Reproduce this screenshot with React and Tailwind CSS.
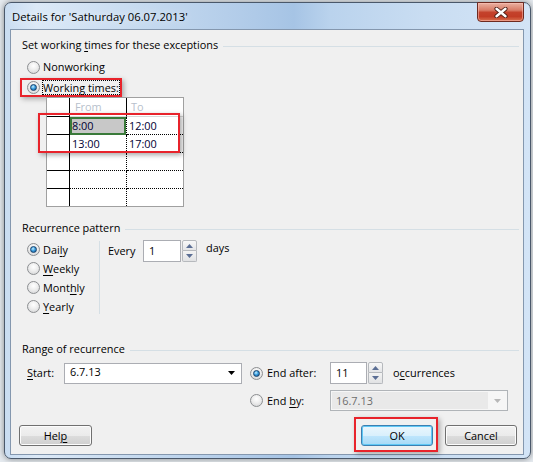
import React from "react";

const RED = "border-[#e8232b]";

function Radio({ checked }) {
  return (
    <span className="flex h-[13px] w-[13px] shrink-0 items-center justify-center rounded-full border border-[#8c8e91] bg-[radial-gradient(circle_at_50%_35%,#ffffff_0%,#eeeeee_45%,#cfd0d2_100%)]">
      {checked && (
        <span className="h-[7px] w-[7px] rounded-full border border-[#16406b] bg-[radial-gradient(circle_at_40%_35%,#c8f0ff_0%,#3a9ee0_45%,#0f4f8a_100%)]" />
      )}
    </span>
  );
}

function Header({ children }) {
  return (
    <div className="ml-[11px] mr-[4px] flex h-4 items-center">
      <span className="whitespace-nowrap">{children}</span>
      <div className="ml-[5px] mt-[2px] h-px flex-1 bg-[#d5dfe5]" />
    </div>
  );
}

function U({ children }) {
  return <span className="underline decoration-1 underline-offset-[2px]">{children}</span>;
}

function Spinner() {
  return (
    <div className="ml-px flex h-[22px] w-[15px] flex-col">
      <div className="flex h-[11px] items-center justify-center rounded-t-[2px] border border-[#b6b9bd] bg-[linear-gradient(#f8f8f8,#e4e5e7)]">
        <svg width="7" height="4" viewBox="0 0 7 4">
          <path d="M0 4 L3.5 0 L7 4Z" fill="#5b6e94" />
        </svg>
      </div>
      <div className="flex h-[11px] items-center justify-center rounded-b-[2px] border border-t-0 border-[#b6b9bd] bg-[linear-gradient(#f3f3f3,#e1e2e4)]">
        <svg width="7" height="4" viewBox="0 0 7 4">
          <path d="M0 0 L3.5 4 L7 0Z" fill="#5b6e94" />
        </svg>
      </div>
    </div>
  );
}

function Button({ children, primary, className = "" }) {
  const look = primary
    ? "border-[#3c7fb1] bg-[linear-gradient(#eaf6fd_0%,#d9f0fc_50%,#bee6fd_51%,#a7d9f5_100%)] shadow-[inset_0_0_0_1px_#5fc8f5]"
    : "border-[#707070] bg-[linear-gradient(#f2f2f2_0%,#ebebeb_50%,#dddddd_51%,#cfcfcf_100%)] shadow-[inset_0_0_0_1px_#fcfcfc]";
  return (
    <div className={`flex h-[21px] items-center justify-center rounded-[3px] border ${look} ${className}`}>
      {children}
    </div>
  );
}

const rows = [
  ["8:00", "12:00"],
  ["13:00", "17:00"],
  ["", ""],
  ["", ""],
  ["", ""],
];

function TimesTable() {
  return (
    <div className="relative ml-[35px] w-[138px]">
      <div className="grid grid-cols-[23px_57px_56px] border border-[#a0a0a0] bg-white leading-4 text-[#000033]">
        <div className="h-[19px] border-b border-r border-black" />
        <div className="h-[19px] border-b border-r border-b-[#d8d8d8] border-r-black pl-[5px] pt-px text-[#b7bfcc]">From</div>
        <div className="h-[19px] border-b border-[#d8d8d8] pl-[4px] pt-px text-[#b7bfcc]">To</div>
        {rows.map((r, i) => {
          const last = i === rows.length - 1;
          const h = last ? "h-[17px]" : "h-[18px] border-b";
          return (
            <React.Fragment key={i}>
              <div className={`${h} border-r border-black`} />
              {i === 0 ? (
                <div className={`${h} border-r border-dotted border-black`}>
                  <div className="h-[18px] border-2 border-[#3a7a3a] bg-[#c8c8c8] leading-[14px]">{r[0]}</div>
                </div>
              ) : (
                <div className={`${h} border-r border-dotted border-black pl-[2px] leading-[17px]`}>{r[0]}</div>
              )}
              <div className={`${h} border-dotted border-black pl-[2px] leading-[17px]`}>{r[1]}</div>
            </React.Fragment>
          );
        })}
      </div>
      <div className={`pointer-events-none absolute left-[-8px] top-[16px] h-[40px] w-[142px] border-2 ${RED} shadow-[2px_2px_5px_rgba(0,0,0,0.35)]`} />
    </div>
  );
}

function Combo({ text, disabled }) {
  if (disabled) {
    return (
      <div className="flex h-[21px] w-[178px] items-center border border-[#b0b4b8] bg-[#f6f6f6] p-px">
        <div className="flex h-full flex-1 items-center bg-[#e9e9e9] pl-[4px] text-[#6d6d6d]">{text}</div>
        <div className="flex h-full w-[18px] items-center justify-center">
          <svg width="7" height="4" viewBox="0 0 7 4">
            <path d="M0 0 L3.5 4 L7 0Z" fill="#b8b8b8" />
          </svg>
        </div>
      </div>
    );
  }
  return (
    <div className="flex h-[21px] w-[178px] items-center border border-[#abadb3] bg-white">
      <div className="flex-1 pb-[2px] pl-[5px]">{text}</div>
      <div className="flex w-[18px] items-center justify-center pr-[2px]">
        <svg width="7" height="4" viewBox="0 0 7 4">
          <path d="M0 0 L3.5 4 L7 0Z" fill="#000000" />
        </svg>
      </div>
    </div>
  );
}

export default function App() {
  return (
    <div className="h-[462px] w-[533px] overflow-hidden bg-[#e6ebf0] pl-[4px] pt-[2px] font-['Open_Sans','Liberation_Sans',sans-serif] text-[10.9px] leading-4 text-black">
      <div className="flex h-[457px] w-[527px] flex-col rounded-[7px] border border-[#4a586a] bg-[linear-gradient(90deg,#c8dcf1_0%,#dce9f7_6%,#c7dbf0_25%,#b2cce9_45%,#a6c4e5_55%,#bad3ed_62%,#c9ddf2_80%,#d3e4f6_100%)] shadow-[0_0_6px_rgba(0,0,0,0.45)]">
        {/* title bar */}
        <div className="flex h-[26px] items-start">
          <span className="ml-[7px] mt-[6px] flex-1 whitespace-nowrap text-[11.25px] [text-shadow:0_0_8px_rgba(255,255,255,0.95)]">
            Details for 'Sathurday 06.07.2013'
          </span>
          <div className="-mt-px mr-[6px] flex h-[20px] w-[47px] items-center justify-center rounded-b-[4px] border border-[#6e2a20] bg-[linear-gradient(#eab1a2_0%,#d87b66_40%,#c4422c_52%,#c23c25_75%,#d9704f_100%)] shadow-[inset_0_0_0_1px_rgba(255,200,190,0.5)]">
            <svg width="14" height="11" viewBox="0 0 14 11">
              <path d="M2.5 1.8 L11.5 9.2 M11.5 1.8 L2.5 9.2" stroke="#4a1d14" strokeWidth="4.2" strokeLinecap="round" />
              <path d="M2.5 1.8 L11.5 9.2 M11.5 1.8 L2.5 9.2" stroke="#ffffff" strokeWidth="2.4" strokeLinecap="round" />
            </svg>
          </div>
        </div>

        {/* client */}
        <div className="ml-[5px] flex h-[426px] w-[514px] flex-col border border-[#8497ae] bg-[#f0f0f0]">
          <div className="mt-[7px]">
            <Header>
              Set working <U>t</U>imes for these exceptions
            </Header>
          </div>
          <div className="ml-[16px] mt-[6px] flex h-4 items-center">
            <Radio />
            <span className="ml-[3px]">Nonworking</span>
          </div>
          <div className={`ml-[9px] mt-[3px] flex h-[19px] w-fit items-center border-2 ${RED} pl-[5px] shadow-[2px_2px_5px_rgba(0,0,0,0.3)]`}>
            <Radio checked />
            <span className="ml-[2px] whitespace-nowrap border border-dotted border-black leading-[13px]">Working times:</span>
          </div>
          <TimesTable />

          <div className="mt-[13px]">
            <Header>Recurrence pattern</Header>
          </div>
          <div className="ml-[16px] mt-[4px] flex h-[76px]">
            <div className="flex w-[72px] flex-col">
              {[
                [true, <>Dai<U>l</U>y</>],
                [false, <><U>W</U>eekly</>],
                [false, <>Mont<U>h</U>ly</>],
                [false, <><U>Y</U>early</>],
              ].map(([c, label], i) => (
                <div key={i} className="flex h-[19px] items-center">
                  <Radio checked={c} />
                  <span className="ml-[3px]">{label}</span>
                </div>
              ))}
            </div>
            <div className="mt-px h-[73px] w-px bg-[#d5dfe5]" />
            <div className="ml-[8px] flex items-start">
              <div className="flex h-[22px] w-[35px] items-center">Every</div>
              <div className="flex h-[22px] w-[38px] items-center border border-[#abadb3] bg-white pl-[5px]">1</div>
              <Spinner />
              <div className="ml-[9px]">days</div>
            </div>
          </div>

          <div className="mt-[25px]">
            <Header>Range of recurrence</Header>
          </div>
          <div className="ml-[16px] mt-[5px] flex h-[22px] items-center">
            <span className="w-[37px]">
              <U>S</U>tart:
            </span>
            <Combo text="6.7.13" />
            <div className="ml-[8px] flex w-[80px] items-center">
              <Radio checked />
              <span className="ml-[4px]">End after:</span>
            </div>
            <div className="flex h-[22px] w-[37px] items-center border border-[#abadb3] bg-white pl-[5px]">11</div>
            <Spinner />
            <span className="ml-[10px]">
              o<U>c</U>currences
            </span>
          </div>
          <div className="ml-[239px] mt-[6px] flex h-[21px] items-center">
            <div className="flex w-[80px] items-center">
              <Radio />
              <span className="ml-[4px]">
                End <U>b</U>y:
              </span>
            </div>
            <Combo text="16.7.13" disabled />
          </div>

          <div className="mt-[14px] flex h-[21px] items-center pl-[8px] pr-[6px]">
            <Button className="w-[73px]">
              Hel<U>p</U>
            </Button>
            <div className="flex-1" />
            <div className="relative">
              <Button primary className="w-[72px]">OK</Button>
              <div className={`pointer-events-none absolute left-[-7px] top-[-8px] h-[35px] w-[84px] border-2 ${RED} shadow-[2px_2px_5px_rgba(0,0,0,0.3)]`} />
            </div>
            <Button className="ml-[12px] w-[72px]">Cancel</Button>
          </div>
        </div>
      </div>
    </div>
  );
}
